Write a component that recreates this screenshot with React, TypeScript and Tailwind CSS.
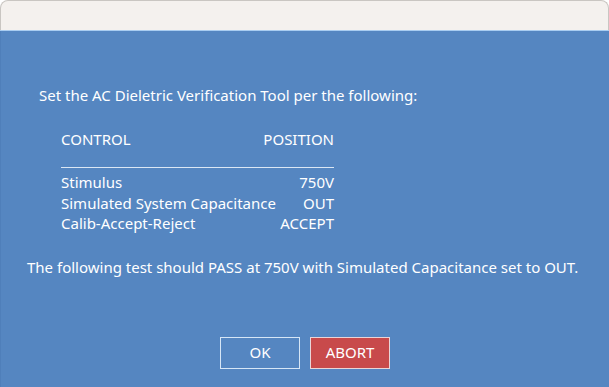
export default function App() {
  return (
    <div className="w-[609px] h-[387px] bg-white overflow-hidden" style={{ fontFamily: '"Noto Sans", sans-serif' }}>
      <div className="w-full h-full flex flex-col">
        <div className="h-[30px] bg-[#f4f1ee] shrink-0 rounded-t-[8px] border-t border-x border-[#c9c6c2]" />
        <div className="h-px bg-[#a9cdf1] shrink-0" />
        <div className="flex-1 bg-[#5586c1] text-white flex flex-col border-l border-[#4f7fba]">
          <div className="pl-[38px] pt-[54px] text-[15px] leading-[20px]">Set the AC Dieletric Verification Tool per the following:</div>
          <div className="ml-[60px] w-[273px] mt-[24px] text-[15px] leading-[20px]">
            <div className="flex justify-between"><span>CONTROL</span><span>POSITION</span></div>
            <div className="h-px bg-[#dbe7f4] mt-[18px] mb-[4px]" />
            <div className="flex justify-between h-[20.5px]"><span>Stimulus</span><span>750V</span></div>
            <div className="flex justify-between h-[20.5px]"><span>Simulated System Capacitance</span><span>OUT</span></div>
            <div className="flex justify-between h-[20.5px]"><span>Calib-Accept-Reject</span><span>ACCEPT</span></div>
          </div>
          <div className="pl-[26px] mt-[23px] text-[15px] leading-[20px]">The following test should PASS at 750V with Simulated Capacitance set to OUT.</div>
          <div className="flex justify-center gap-[10px] mt-[60px]">
            <div className="w-[80px] h-[32px] border border-[#d6e6f6] flex items-center justify-center text-[15px]">OK</div>
            <div className="w-[80px] h-[32px] border border-[#e9d5d8] bg-[#c84a4b] flex items-center justify-center text-[15px]">ABORT</div>
          </div>
        </div>
      </div>
    </div>
  );
}
